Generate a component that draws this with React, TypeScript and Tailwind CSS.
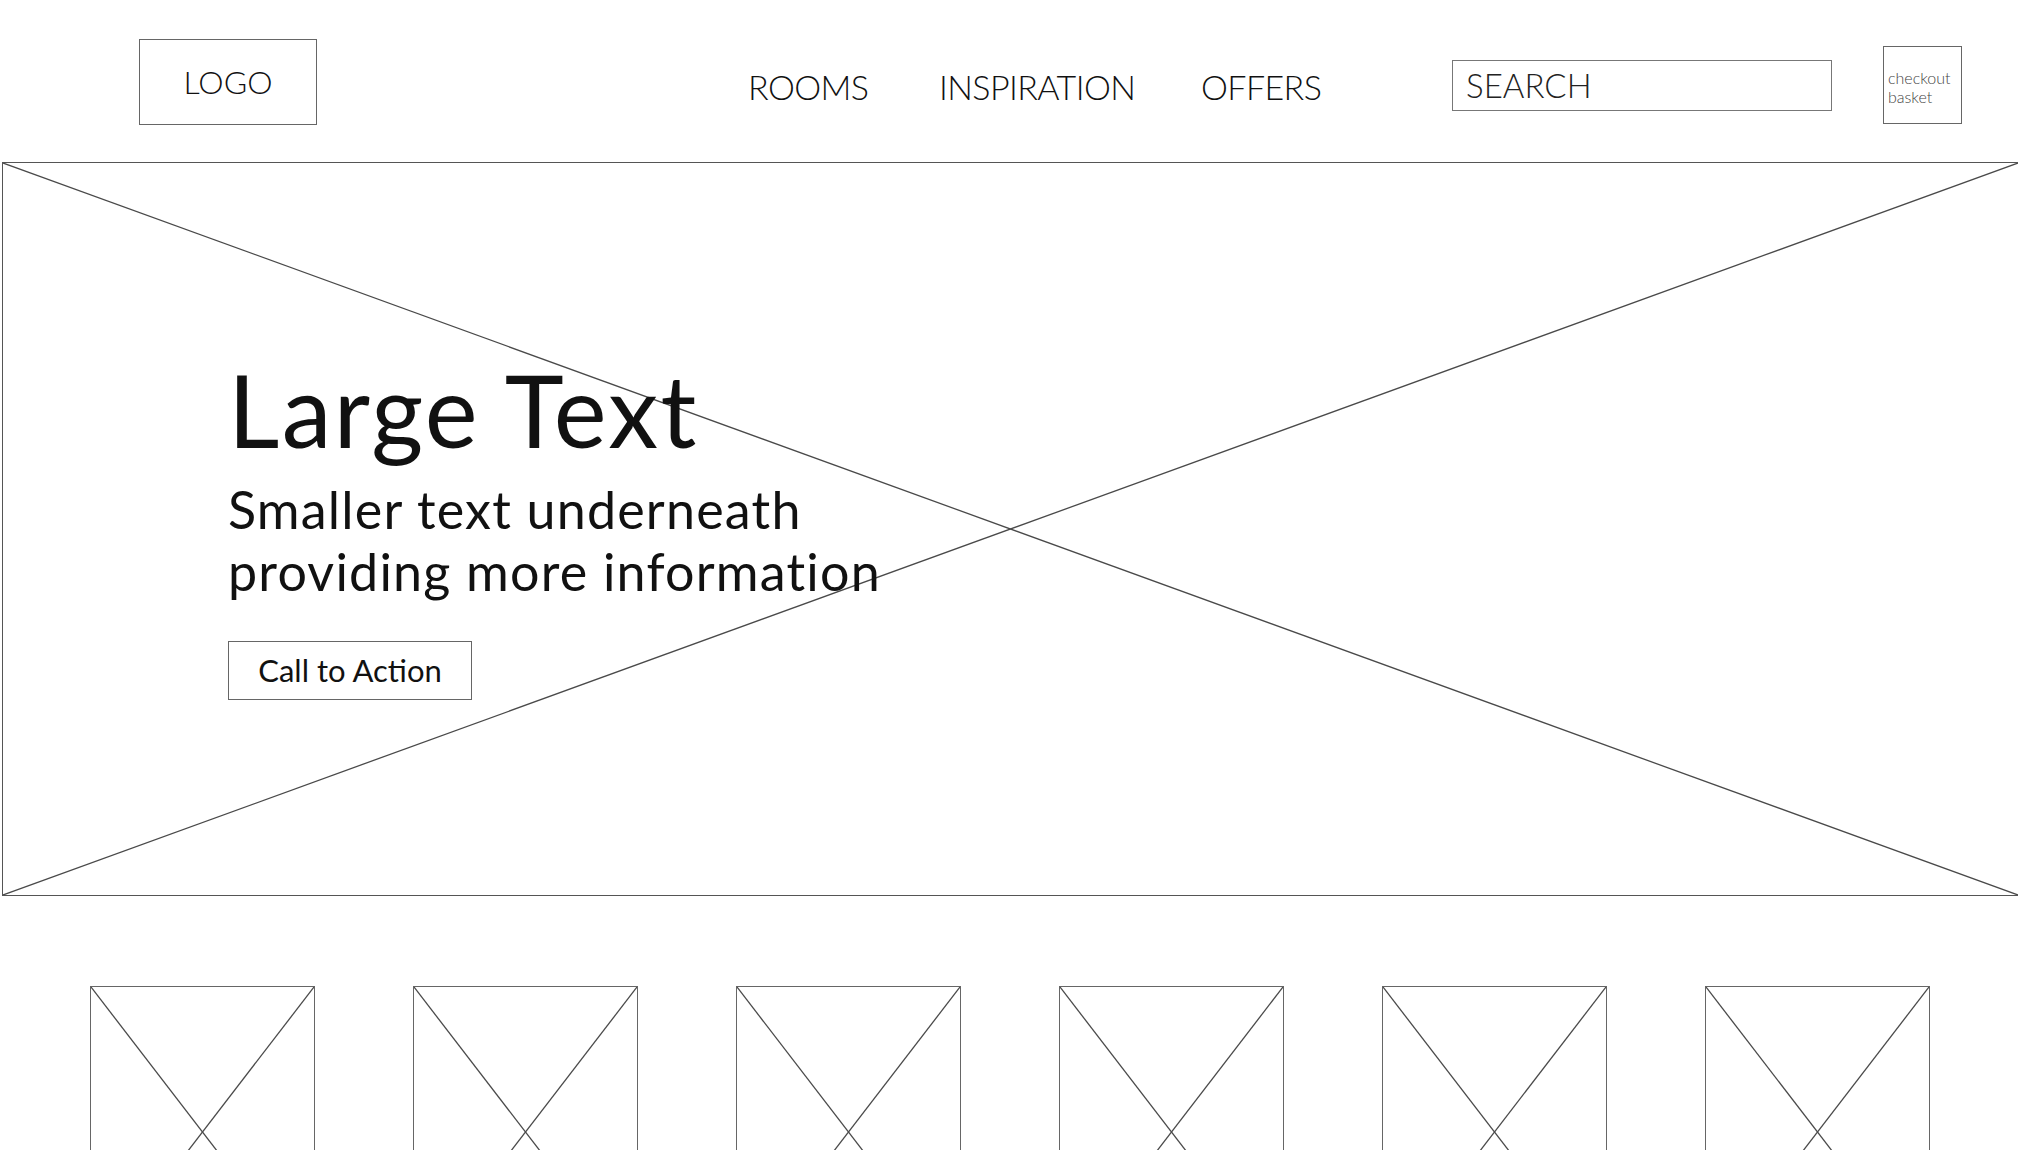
import React from "react";

const Cross = () => (
  <svg
    className="absolute inset-0 h-full w-full"
    viewBox="0 0 100 100"
    preserveAspectRatio="none"
  >
    <line x1="0" y1="0" x2="100" y2="100" stroke="#4a4a4a" strokeWidth="1.3" vectorEffect="non-scaling-stroke" />
    <line x1="0" y1="100" x2="100" y2="0" stroke="#4a4a4a" strokeWidth="1.3" vectorEffect="non-scaling-stroke" />
  </svg>
);

const App = () => {
  return (
    <div className="h-[1150px] w-full overflow-hidden bg-white font-['Lato',sans-serif] text-[#111]">
      {/* Header */}
      <header className="flex h-[162px] items-start pl-[139px]">
        <div className="mt-[39px] flex h-[86px] w-[178px] items-center justify-center border-[1.5px] border-[#666]">
          <span className="text-[32px] font-light leading-none">LOGO</span>
        </div>

        <nav className="ml-[431px] mt-[70px] flex text-[34px] font-light leading-none tracking-[-0.6px]">
          <a className="w-[191px]">ROOMS</a>
          <a className="w-[262px]">INSPIRATION</a>
          <a className="w-[251px]">OFFERS</a>
        </nav>

        <div className="mt-[60px] flex h-[51px] w-[380px] items-center border-[1.5px] border-[#777] pl-[13px]">
          <span className="text-[33px] font-light leading-none text-[#222]">SEARCH</span>
        </div>

        <div className="ml-[51px] mt-[46px] flex h-[78px] w-[79px] items-center border-[1.5px] border-[#666] pl-[4px] pt-[3px]">
          <span className="text-[16px] font-light leading-[19px] text-[#444]">
            checkout
            <br />
            basket
          </span>
        </div>
      </header>

      {/* Hero */}
      <section className="relative ml-[2px] h-[734px] border-y-[1.5px] border-l-[1.5px] border-[#555] pl-[225px] pt-[196px]">
        <Cross />
        <div className="relative">
          <h1 className="text-[100px] font-normal leading-none tracking-[2.3px]">Large Text</h1>
          <p className="mt-[19px] text-[52px] font-normal leading-[62px] tracking-[1.2px]">
            Smaller text underneath
            <br />
            providing more information
          </p>
          <button className="mt-[39px] flex h-[59px] w-[244px] items-center justify-center border-[1.5px] border-[#666] text-[31px] font-normal leading-none">
            Call to Action
          </button>
        </div>
      </section>

      {/* Thumbnails */}
      <div className="mt-[90px] flex gap-[98px] pl-[90px]">
        {[1, 2, 3, 4, 5, 6].map((i) => (
          <div
            key={i}
            className="relative h-[292px] w-[225px] shrink-0 border-[1.5px] border-[#666]"
          >
            <Cross />
          </div>
        ))}
      </div>
    </div>
  );
};

export default App;
